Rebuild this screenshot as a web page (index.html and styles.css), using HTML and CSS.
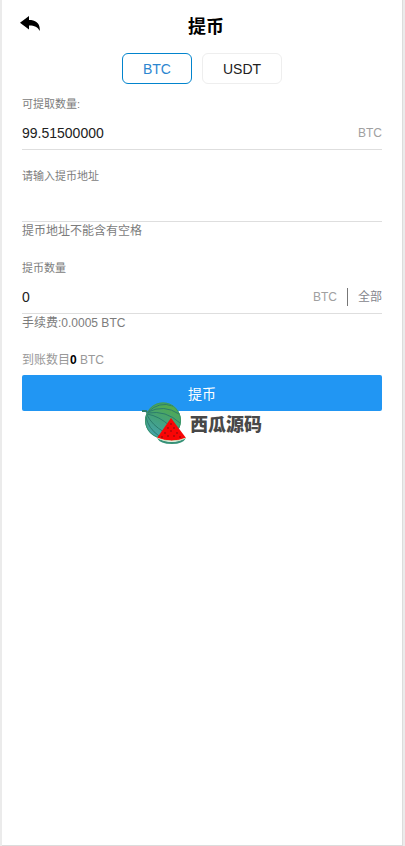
FILE: index.html
```html
<!DOCTYPE html>
<html lang="zh-CN">
<head>
<meta charset="utf-8">
<meta name="viewport" content="width=device-width, initial-scale=1">
<title>提币</title>
<link rel="stylesheet" href="styles.css">
</head>
<body>
<main class="page">
  <header class="header">
    <button class="back" type="button" aria-label="返回">
      <svg width="20" height="18" viewBox="0 0 20 18" aria-hidden="true"><path d="M9 0V4C15.500 4 20.500 7 19.700 15C18 11 14 9.400 9 9.500V13.400L0 6.700Z"/></svg>
    </button>
    <h1 class="title">提币</h1>
  </header>
  <nav class="tabs">
    <button class="tab tab-active" type="button">BTC</button>
    <button class="tab" type="button">USDT</button>
  </nav>
  <form class="form">
    <div class="field">
      <label class="label" for="available">可提取数量:</label>
      <div class="control">
        <input class="input" id="available" type="text" value="99.51500000" readonly>
        <span class="unit">BTC</span>
      </div>
    </div>
    <div class="field">
      <label class="label" for="address">请输入提币地址</label>
      <div class="control"><input class="input" id="address" type="text"></div>
      <p class="hint">提币地址不能含有空格</p>
    </div>
    <div class="field">
      <label class="label" for="amount">提币数量</label>
      <div class="control">
        <input class="input" id="amount" type="text" value="0">
        <span class="unit">BTC</span>
        <button class="all" type="button">全部</button>
      </div>
      <p class="hint">手续费:0.0005 BTC</p>
    </div>
    <p class="result">到账数目<strong class="received">0</strong> BTC</p>
    <div class="action">
      <button class="submit" type="submit">提币</button>
      <div class="brand">
        <svg class="melon" width="46" height="44" viewBox="0 0 46 44" aria-hidden="true">
          <defs>
            <linearGradient id="rind" x1="0.7" y1="0" x2="0.3" y2="1"><stop offset="0" stop-color="#56ad42"/><stop offset="0.5" stop-color="#43a17a"/><stop offset="1" stop-color="#45a3b0"/></linearGradient>
          </defs>
          <ellipse cx="21" cy="19.500" rx="18" ry="18" fill="url(#rind)"/>
          <g fill="none" stroke="#2b7c6c" stroke-width="1">
            <path d="M0 10L4 10L6 12" stroke-width="2"/>
            <path d="M6 11Q17 0 31 5M6 11Q22 3 37 13M6 12Q24 9 38 22M5 13Q17 15 28 25M5 14Q10 24 22 31M4 16Q6 27 17 35"/>
            <circle cx="21" cy="19.500" r="17.500" stroke="#3a9468"/>
          </g>
          <path d="M15 37Q30 45 44 37Q41 43 30 43Q18 43 15 37Z" fill="#369177"/>
          <path d="M29 17L44 37Q30 43 15 37Z" fill="#f90505"/>
          <path d="M15 37Q30 43 44 37" fill="none" stroke="#c8ddb4"/>
          <g fill="#6e1010"><circle cx="29" cy="23" r=".8"/><circle cx="26" cy="27" r=".8"/><circle cx="32" cy="27" r=".8"/><circle cx="29" cy="30" r=".8"/><circle cx="23" cy="32" r=".8"/><circle cx="35" cy="32" r=".8"/><circle cx="20" cy="36" r=".8"/><circle cx="26" cy="35" r=".8"/><circle cx="32" cy="35" r=".8"/><circle cx="38" cy="36" r=".8"/></g>
        </svg>
        <span class="brand-name">西瓜源码</span>
      </div>
    </div>
  </form>
</main>
</body>
</html>
```
FILE: styles.css
```css
* {
  box-sizing: border-box;
}

body {
  margin: 0;
  background: #ebebeb;
  color: #212121;
  font-family: "Liberation Sans", "Noto Sans CJK SC", sans-serif;
  font-size: 14px;
}

button,
input {
  margin: 0;
  padding: 0;
  border: 0;
  background: none;
  color: inherit;
  font: inherit;
}

button {
  cursor: pointer;
}

p {
  margin: 0;
}

.page {
  min-height: 100vh;
  margin: 0 2px;
  border-right: 1px solid #dcdcdc;
  border-bottom: 1px solid #dcdcdc;
  background: #fff;
}

.header {
  display: grid;
  grid-template-columns: 48px 1fr 40px;
  align-items: center;
  height: 50px;
}

.back {
  display: flex;
  padding-left: 18px;
}

.title {
  margin: 0;
  color: #000;
  font-size: 18px;
  font-weight: 700;
  text-align: center;
}

.tabs {
  display: flex;
  justify-content: center;
  gap: 10px;
  padding: 3px 0 12px;
}

.tab {
  height: 31px;
  padding: 0 20px;
  border: 1px solid #eee;
  border-radius: 6px;
}

.tab-active {
  border-color: #0284cd;
  color: #2c86d0;
}

.form {
  padding: 0 20px;
}

.field {
  padding-bottom: 18px;
}

.label {
  display: block;
  margin-bottom: 5px;
  color: #7c7c7c;
  font-size: 11px;
  line-height: 16px;
}

.control {
  display: flex;
  align-items: center;
  height: 33px;
  border-bottom: 1px solid #dedede;
}

.input {
  flex: 1;
  min-width: 0;
  height: 32px;
  outline: 0;
}

.unit {
  color: #a0a0a0;
  font-size: 12px;
}

.all {
  height: 18px;
  margin-left: 10px;
  padding-left: 10px;
  border-left: 1px solid #777;
  color: #85858d;
  font-size: 12px;
  line-height: 18px;
}

.hint {
  margin-bottom: 2px;
  color: #7c7c7c;
  font-size: 12px;
  line-height: 18px;
}

.result {
  margin-bottom: 7px;
  color: #999;
  font-size: 12px;
  line-height: 16px;
}

.received {
  color: #000;
}

.action {
  position: relative;
}

.submit {
  display: block;
  width: 100%;
  height: 36px;
  border-radius: 2px;
  background: #2196f3;
  color: #fff;
}

.brand {
  position: absolute;
  top: 26px;
  left: 50%;
  display: flex;
  align-items: center;
  gap: 2px;
  transform: translateX(-50%);
  pointer-events: none;
}

.brand-name {
  color: #484848;
  font-size: 18px;
  font-weight: 900;
  white-space: nowrap;
}
```
